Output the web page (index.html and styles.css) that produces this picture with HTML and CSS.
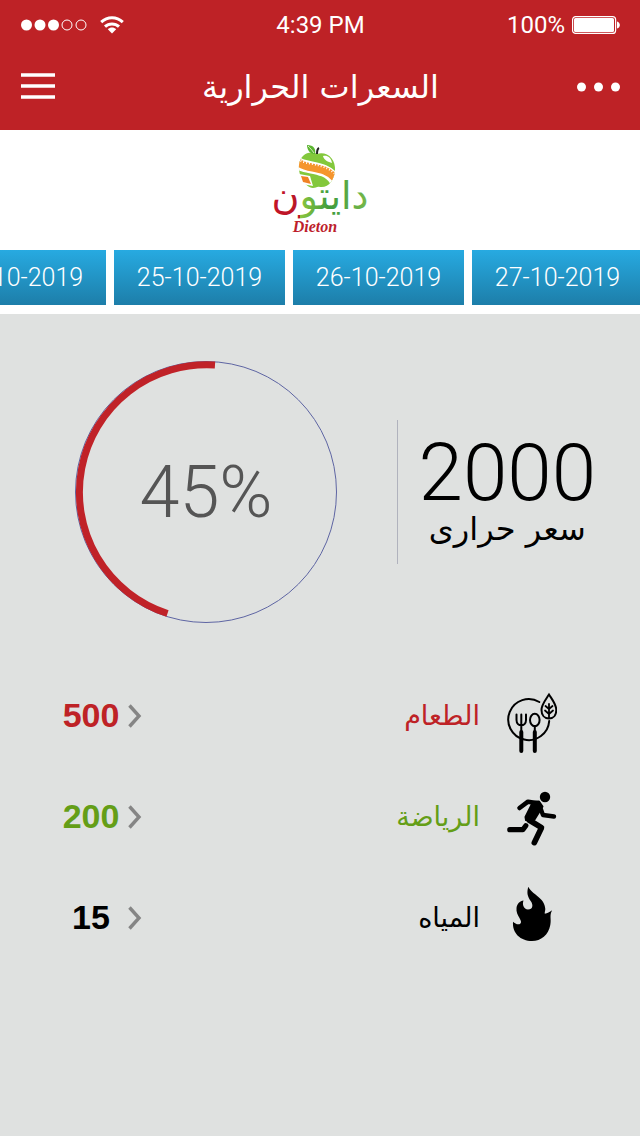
FILE: index.html
```html
<!DOCTYPE html>
<html lang="ar">
<head>
<meta charset="utf-8">
<meta name="viewport" content="width=device-width, initial-scale=1">
<title>السعرات الحرارية</title>
<link rel="stylesheet" href="styles.css">
</head>
<body>
<header class="header">
  <div class="status">
    <div class="status-left">
      <svg width="67" height="12" viewBox="0 0 67 12" aria-hidden="true">
        <g fill="#fff"><circle cx="5.5" cy="6" r="5.5"/><circle cx="19" cy="6" r="5.5"/><circle cx="32.5" cy="6" r="5.5"/></g>
        <g fill="none" stroke="#fff"><circle cx="46" cy="6" r="5"/><circle cx="60" cy="6" r="5"/></g>
      </svg>
      <svg width="24" height="18" viewBox="0 0 24 18" aria-hidden="true">
        <g fill="none" stroke="#fff" stroke-width="3"><path d="M1.2 6.2C7.5.3 16.5.3 22.8 6.2"/><path d="M5 10.700C9 7 15 7 19 10.700"/></g>
        <path d="M7.800 13.200c2.500-2.300 5.900-2.300 8.400 0L12 17.500z" fill="#fff"/>
      </svg>
    </div>
    <span class="time">4:39 PM</span>
    <div class="status-right">
      <span>100%</span>
      <svg width="48" height="18" viewBox="0 0 48 18" aria-hidden="true">
        <rect x=".6" y=".6" width="43" height="16.800" rx="3" fill="none" stroke="#fff" stroke-width="1.200"/>
        <rect x="2" y="2" width="40" height="14" rx="1.500" fill="#fff"/>
        <path d="M45 5.500c3.800 1 3.800 6 0 7z" fill="#fff"/>
      </svg>
    </div>
  </div>
  <nav class="nav">
    <button class="icon-button" type="button" aria-label="القائمة">
      <svg width="34" height="28" viewBox="0 0 34 28"><path d="M0 2h34M0 13h34M0 24h34" stroke="#fff" stroke-width="3.400"/></svg>
    </button>
    <h1 class="title" dir="rtl">السعرات الحرارية</h1>
    <button class="icon-button icon-button-end" type="button" aria-label="المزيد">
      <svg width="43" height="10" viewBox="0 0 43 10" fill="#fff"><circle cx="4.500" cy="5" r="4.500"/><circle cx="21.500" cy="5" r="4.500"/><circle cx="38.500" cy="5" r="4.500"/></svg>
    </button>
  </nav>
</header>
<main>
  <section class="brand">
    <svg class="logo" width="100" height="92" viewBox="0 0 100 92" role="img" aria-label="Dieton">
      <defs>
        <linearGradient id="word" x1="0" x2="1" y1="0" y2="0">
          <stop offset="0" stop-color="#c41425"/><stop offset=".29" stop-color="#b81828"/>
          <stop offset=".29" stop-color="#8cc63f"/><stop offset=".6" stop-color="#3f9b3d"/><stop offset="1" stop-color="#78b94a"/>
        </linearGradient>
        <clipPath id="apple"><path d="M47 11C40 7 30 11 29 22c-1 11 6 22 14 23 3 0 4-2 7-1 9 1 14-7 15-16 1-12-8-20-18-17z"/></clipPath>
      </defs>
      <path d="M47 11C40 7 30 11 29 22c-1 11 6 22 14 23 3 0 4-2 7-1 9 1 14-7 15-16 1-12-8-20-18-17z" fill="#83c83c"/>
      <path d="M53 13c4-1 8 1 9 7-4-1-8-3-9-7z" fill="#fff"/>
      <path d="M37 2c7 0 9 4 8 9-5 0-8-4-8-9z" fill="#5bb531"/>
      <path d="M38 3c2 2 4 4 6 7" stroke="#d8efbd" fill="none"/>
      <path d="M47 11c0-3 0-5 2-6" stroke="#222" stroke-width="2" fill="none"/>
      <g clip-path="url(#apple)" fill="none">
        <path d="M26 18c5 9 29 3 39 19" stroke="#fff" stroke-width="12"/>
        <path d="M28 19c8 8 26 3 37 16" stroke="#f5952d" stroke-width="8"/>
        <path d="M28 16c9 7 25 3 37 15" stroke="#fff" stroke-width="2" stroke-dasharray="1 2"/>
      </g>
      <path d="M29 31l11 2 3 10-11-2z" fill="#fff"/>
      <path d="M31 33l7 1 3 7-8-2z" fill="#f08224"/>
      <text class="logo-word" x="50" y="66" text-anchor="middle" direction="rtl" fill="url(#word)">دايتون</text>
      <text class="logo-name" x="45" y="89" text-anchor="middle">Dieton</text>
    </svg>
  </section>
  <div class="dates">
    <div class="dates-track">
      <button class="date" type="button">24-10-2019</button>
      <button class="date" type="button">25-10-2019</button>
      <button class="date" type="button">26-10-2019</button>
      <button class="date" type="button">27-10-2019</button>
    </div>
  </div>
  <section class="summary">
    <div class="gauge">
      <svg class="gauge-ring" width="262" height="262" viewBox="0 0 262 262" fill="none" aria-hidden="true">
        <circle cx="131" cy="131" r="130.500" stroke="#5e65a3"/>
        <path d="M92.500 252.500A127.500 127.500 0 0 1 140 4" stroke="#c02228" stroke-width="7"/>
      </svg>
      <span class="gauge-value">45%</span>
    </div>
    <div class="goal">
      <strong class="goal-value">2000</strong>
      <span class="goal-unit" dir="rtl">سعر حرارى</span>
    </div>
  </section>
  <ul class="list">
    <li><button class="row row-food" type="button">
      <span class="row-value">500</span>
      <svg width="14" height="24" viewBox="0 0 14 24"><path d="M1.500 1.500L11 12l-9.500 10.500" fill="none" stroke="#858585" stroke-width="3.400"/></svg>
      <span class="row-label" dir="rtl">الطعام</span>
      <svg class="row-icon" width="50" height="76" viewBox="0 0 50 76" fill="none" stroke="#000" stroke-width="2" stroke-linecap="round">
        <path d="M42.200 43A20.500 20.500 0 1 1 32.300 24"/>
        <path d="M42 16.500C38.500 22 34.500 26.500 34.500 32c0 5 3 8.500 7.500 8.500s7.300-3.500 7.300-8.500c0-5.500-3.800-10-7.300-15.500z"/>
        <path d="M42 26v14M42 31l-3.500-3M42 31l3.500-3M42 36l-4-3.500M42 36l4-3.500" stroke-width="1.800"/>
        <path d="M9.500 36.500V42c0 7 9.500 7 9.500 0v-5.500M14.300 36.500V54"/>
        <ellipse cx="27.800" cy="42" rx="4.800" ry="6.200"/><path d="M27.800 48v6"/>
        <path d="M14.300 54v19M27.800 54v19" stroke-width="4"/>
      </svg>
    </button></li>
    <li><button class="row row-sport" type="button">
      <span class="row-value">200</span>
      <svg width="14" height="24" viewBox="0 0 14 24"><path d="M1.500 1.500L11 12l-9.500 10.500" fill="none" stroke="#858585" stroke-width="3.400"/></svg>
      <span class="row-label" dir="rtl">الرياضة</span>
      <svg class="row-icon" width="50" height="76" viewBox="0 0 50 76" fill="none" stroke="#000" stroke-linecap="round" stroke-linejoin="round">
        <circle cx="38" cy="18" r="5.200" fill="#000" stroke="none"/>
        <path d="M12.500 29l8.500-6.300 10 1.600" stroke-width="4.600"/>
        <path d="M26 23l6-.5 3.500 5-8 13-8.500.5-.5-3z" fill="#000" stroke-width="2"/>
        <path d="M33 28l3 8 11 1.500" stroke-width="4.400"/>
        <path d="M22 41l12.500 7.700-7.200 15" stroke-width="5.600"/>
        <path d="M2.800 50.700h13l3-4" stroke-width="5.200"/>
      </svg>
    </button></li>
    <li><button class="row row-water" type="button">
      <span class="row-value">15</span>
      <svg width="14" height="24" viewBox="0 0 14 24"><path d="M1.500 1.500L11 12l-9.500 10.500" fill="none" stroke="#858585" stroke-width="3.400"/></svg>
      <span class="row-label" dir="rtl">المياه</span>
      <svg class="row-icon" width="50" height="76" viewBox="0 0 50 76" aria-hidden="true">
        <path d="M21.300 6.700c3 7.300 16.900 11 17 22.300 0 2-.8 3-.5 4.800 2.700-.4 4.700-1.800 7.300-3.500-3 5.700-.5 8.700-1.800 14.700C41.500 55 34 61 25 61 13.500 61 5 53 6 41.700c2 2 5 3.300 7 2.200 4-3.200-4.500-8-3.500-16 .7-4.500 3.300-6.600 7-7.400-1.500 3.500 0 9 4.500 9 5 0 5.300-4.500 3-8-3.500-5-4.500-8.500-2.700-14.800z"/>
      </svg>
    </button></li>
  </ul>
</main>
</body>
</html>
```
FILE: styles.css
```css
* { box-sizing: border-box; }

body {
  margin: 0;
  min-height: 100vh;
  background: #dfe1e0;
  color: #000;
  font-family: Roboto, "DejaVu Sans", sans-serif;
}

button {
  margin: 0;
  padding: 0;
  border: 0;
  background: none;
  color: inherit;
  font: inherit;
  cursor: pointer;
}

svg { display: block; flex: none; }

.header {
  padding: 0 20px 6px 21px;
  background: #be2226;
  color: #fff;
}

.status,
.nav {
  display: grid;
  grid-template-columns: 1fr auto 1fr;
  align-items: center;
}

.status { height: 50px; font-size: 24px; line-height: 28px; }
.status-left { display: flex; align-items: center; gap: 12px; }
.status-right { display: flex; align-items: center; justify-content: flex-end; gap: 7px; }

.nav { height: 74px; }
.icon-button { justify-self: start; }
.icon-button-end { justify-self: end; }

.title {
  margin: 0;
  font-family: "DejaVu Sans", sans-serif;
  font-size: 32px;
  font-weight: 400;
  line-height: 40px;
}

.brand {
  display: flex;
  justify-content: center;
  height: 120px;
  padding-top: 13px;
  background: #fff;
}

.logo-word { font-family: "DejaVu Sans", sans-serif; font-size: 38px; }

.logo-name {
  fill: #bd1e2c;
  font-family: "Liberation Serif", serif;
  font-size: 16px;
  font-style: italic;
  font-weight: 700;
}

.dates {
  overflow: hidden;
  padding-bottom: 9px;
  background: #fff;
}

.dates-track { display: flex; gap: 8px; margin-left: -65px; }

.date {
  flex: none;
  width: 171px;
  height: 55px;
  background: linear-gradient(#27aae1, #1d7ea9);
  color: #fff;
  font-size: 25px;
  font-weight: 300;
}

.summary {
  display: flex;
  align-items: center;
  justify-content: space-between;
  padding: 47px 44px 42px 75px;
}

.gauge { display: grid; place-items: center; }
.gauge-ring, .gauge-value { grid-area: 1 / 1; }
.gauge-value { color: #555; font-size: 72px; font-weight: 300; }

.goal {
  display: flex;
  flex-direction: column;
  align-items: center;
  height: 144px;
  padding: 15px 0 0 21px;
  border-left: 1px solid #b0b2bd;
}

.goal-value { font-size: 80px; font-weight: 300; line-height: 76px; }

.goal-unit {
  font-family: "DejaVu Sans", sans-serif;
  font-size: 32px;
  line-height: 36px;
}

.list { margin: 0; padding: 0; list-style: none; }

.row {
  display: flex;
  align-items: center;
  width: 100%;
  height: 101px;
  padding: 0 83px 0 56px;
}

.row-value {
  width: 70px;
  margin-right: 2px;
  font-family: "Liberation Sans", sans-serif;
  font-size: 34px;
  font-weight: 700;
  text-align: center;
}

.row-label {
  flex: 1;
  font-family: "DejaVu Sans", sans-serif;
  font-size: 27px;
  text-align: start;
}

.row-icon { margin-left: 27px; }
.row-food { color: #be2226; }
.row-sport { color: #649e17; }
```
